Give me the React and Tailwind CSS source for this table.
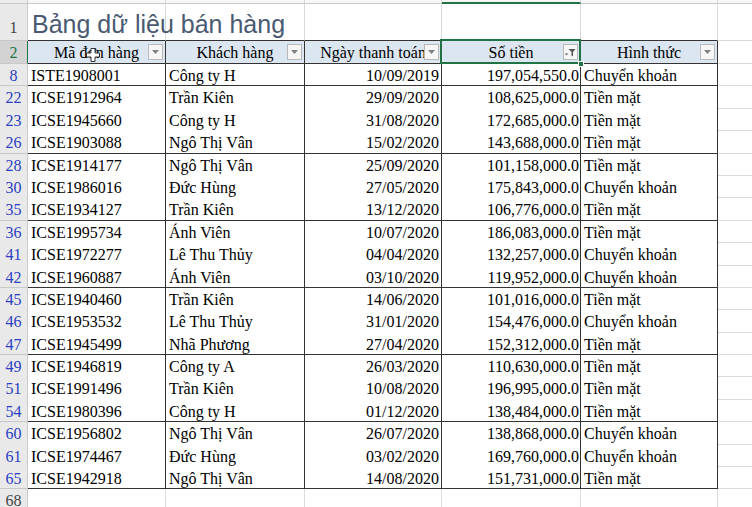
const rows = [
    ['8', 'ISTE1908001', 'Công ty H', '10/09/2019', '197,054,550.0', 'Chuyển khoản'],
    ['22', 'ICSE1912964', 'Trần Kiên', '29/09/2020', '108,625,000.0', 'Tiền mặt'],
    ['23', 'ICSE1945660', 'Công ty H', '31/08/2020', '172,685,000.0', 'Tiền mặt'],
    ['26', 'ICSE1903088', 'Ngô Thị Vân', '15/02/2020', '143,688,000.0', 'Tiền mặt'],
    ['28', 'ICSE1914177', 'Ngô Thị Vân', '25/09/2020', '101,158,000.0', 'Tiền mặt'],
    ['30', 'ICSE1986016', 'Đức Hùng', '27/05/2020', '175,843,000.0', 'Chuyển khoản'],
    ['35', 'ICSE1934127', 'Trần Kiên', '13/12/2020', '106,776,000.0', 'Tiền mặt'],
    ['36', 'ICSE1995734', 'Ánh Viên', '10/07/2020', '186,083,000.0', 'Tiền mặt'],
    ['41', 'ICSE1972277', 'Lê Thu Thủy', '04/04/2020', '132,257,000.0', 'Chuyển khoản'],
    ['42', 'ICSE1960887', 'Ánh Viên', '03/10/2020', '119,952,000.0', 'Chuyển khoản'],
    ['45', 'ICSE1940460', 'Trần Kiên', '14/06/2020', '101,016,000.0', 'Tiền mặt'],
    ['46', 'ICSE1953532', 'Lê Thu Thủy', '31/01/2020', '154,476,000.0', 'Chuyển khoản'],
    ['47', 'ICSE1945499', 'Nhã Phương', '27/04/2020', '152,312,000.0', 'Tiền mặt'],
    ['49', 'ICSE1946819', 'Công ty A', '26/03/2020', '110,630,000.0', 'Tiền mặt'],
    ['51', 'ICSE1991496', 'Trần Kiên', '10/08/2020', '196,995,000.0', 'Tiền mặt'],
    ['54', 'ICSE1980396', 'Công ty H', '01/12/2020', '138,484,000.0', 'Tiền mặt'],
    ['60', 'ICSE1956802', 'Ngô Thị Vân', '26/07/2020', '138,868,000.0', 'Chuyển khoản'],
    ['61', 'ICSE1974467', 'Đức Hùng', '03/02/2020', '169,760,000.0', 'Chuyển khoản'],
    ['65', 'ICSE1942918', 'Ngô Thị Vân', '14/08/2020', '151,731,000.0', 'Tiền mặt'],
]

const widths = ['w-[138px]', 'w-[139px]', 'w-[137px]', 'w-[139px]', 'w-[137px]']
const headers = ['Mã đơn hàng', 'Khách hàng', 'Ngày thanh toán', 'Số tiền', 'Hình thức']

function FilterButton({ active }) {
    return (
        <div className="absolute right-[2px] top-[3px] z-10 flex h-[16px] w-[15px] items-center justify-center border border-[#b9b9b9] bg-[#f6f6f6]">
            {active ? (
                <svg width="11" height="9" viewBox="0 0 11 9">
                    <path d="M3.5 1h7L8 4v4.5L6.5 7.5V4z" fill="#555" />
                    <path d="M0 5.5h3L1.5 7.5z" fill="#555" />
                </svg>
            ) : (
                <svg width="7" height="4" viewBox="0 0 7 4">
                    <path d="M0 0h7L3.5 4z" fill="#808080" />
                </svg>
            )}
        </div>
    )
}

export default function App() {
    return (
        <div className="h-[507px] w-[752px] overflow-hidden bg-white font-['Liberation_Serif',serif] text-[16px] leading-[18px] text-black">
            {/* column header strip, mostly cut off */}
            <div className="flex h-[4px]">
                <div className="w-[28px] shrink-0 border-r border-b border-[#c8c8c8] bg-[#ececec]" />
                {widths.map((w, i) => (
                    <div
                        key={i}
                        className={`${w} shrink-0 border-r border-[#d6d6d6] bg-[#f7f7f7] ${i === 3 ? 'border-b-2 border-b-[#217346]' : 'border-b border-b-[#c8c8c8]'}`}
                    />
                ))}
                <div className="flex-1 border-b border-[#c8c8c8] bg-[#f7f7f7]" />
            </div>

            {/* row 1: title */}
            <div className="flex h-[37px]">
                <div className="flex w-[28px] shrink-0 justify-center border-r border-b border-[#c8c8c8] bg-[#e9e9e9] pt-[15px] text-[#444]">1</div>
                {widths.map((w, i) => (
                    <div key={i} className={`${w} relative shrink-0 border-r border-b border-r-[#d9d9d9] border-b-[#333]`}>
                        {i === 0 && (
                            <div className="absolute left-[4px] top-[8px] z-10 whitespace-nowrap font-['Liberation_Sans',sans-serif] text-[25px] leading-none text-[#4a5a72]">
                                Bảng dữ liệu bán hàng
                            </div>
                        )}
                    </div>
                ))}
                <div className="flex-1 border-b border-[#d9d9d9]" />
            </div>

            {/* row 2: table header */}
            <div className="flex h-[23px]">
                <div className="flex w-[28px] shrink-0 justify-center border-r border-b border-r-[#217346] border-b-[#c8c8c8] bg-[#d3d3d3] pt-[3px] text-[#217346]">2</div>
                {widths.map((w, i) => (
                    <div key={i} className={`${w} relative shrink-0 border-r border-b border-[#333] bg-[#dce6f1]`}>
                        <div className="flex h-full justify-center overflow-hidden whitespace-nowrap pt-[3px]">{headers[i]}</div>
                        <FilterButton active={i === 3} />
                        {i === 0 && (
                            <svg className="absolute left-[58px] top-[7px] z-20" width="14" height="14" viewBox="0 0 14 14">
                                <path d="M5 0.5h4v4.5h4.5v4H9v4.5H5V9H0.5V5H5z" fill="#fff" stroke="#333" strokeWidth="1" />
                            </svg>
                        )}
                        {i === 3 && (
                            <>
                                <div className="pointer-events-none absolute -left-[2px] -top-[2px] -right-[1px] -bottom-[1px] z-20 border-2 border-[#217346]" />
                                <div className="absolute -right-[4px] -bottom-[4px] z-30 h-[6px] w-[6px] border border-white bg-[#217346]" />
                            </>
                        )}
                    </div>
                ))}
                <div className="flex-1 border-b border-[#d9d9d9]" />
            </div>

            {/* filtered data rows */}
            {rows.map((r, idx) => {
                const line = idx % 3 === 0
                return (
                    <div key={r[0]} className="flex h-[22.4px]">
                        <div className={`flex w-[28px] shrink-0 justify-center border-r border-[#c8c8c8] bg-[#e9e9e9] pt-[3px] text-[#2b3fc2] ${line ? 'border-b' : ''}`}>
                            {r[0]}
                        </div>
                        {widths.map((w, i) => (
                            <div
                                key={i}
                                className={`${w} flex shrink-0 overflow-hidden whitespace-nowrap border-r border-[#333] pt-[3px] ${line ? 'border-b' : ''} ${i === 2 ? 'justify-end pr-[2px]' : i === 3 ? 'justify-end pr-[1px]' : 'pl-[3px]'}`}
                            >
                                {r[i + 1]}
                            </div>
                        ))}
                        <div className="flex-1 border-b border-[#dadada]" />
                    </div>
                )
            })}

            {/* row 68 */}
            <div className="flex h-[20px]">
                <div className="flex w-[28px] shrink-0 justify-center border-r border-[#c8c8c8] bg-[#e9e9e9] pt-[3px] text-[#444]">68</div>
                {widths.map((w, i) => (
                    <div key={i} className={`${w} shrink-0 border-r border-[#dcdcdc]`} />
                ))}
                <div className="flex-1" />
            </div>
        </div>
    )
}
